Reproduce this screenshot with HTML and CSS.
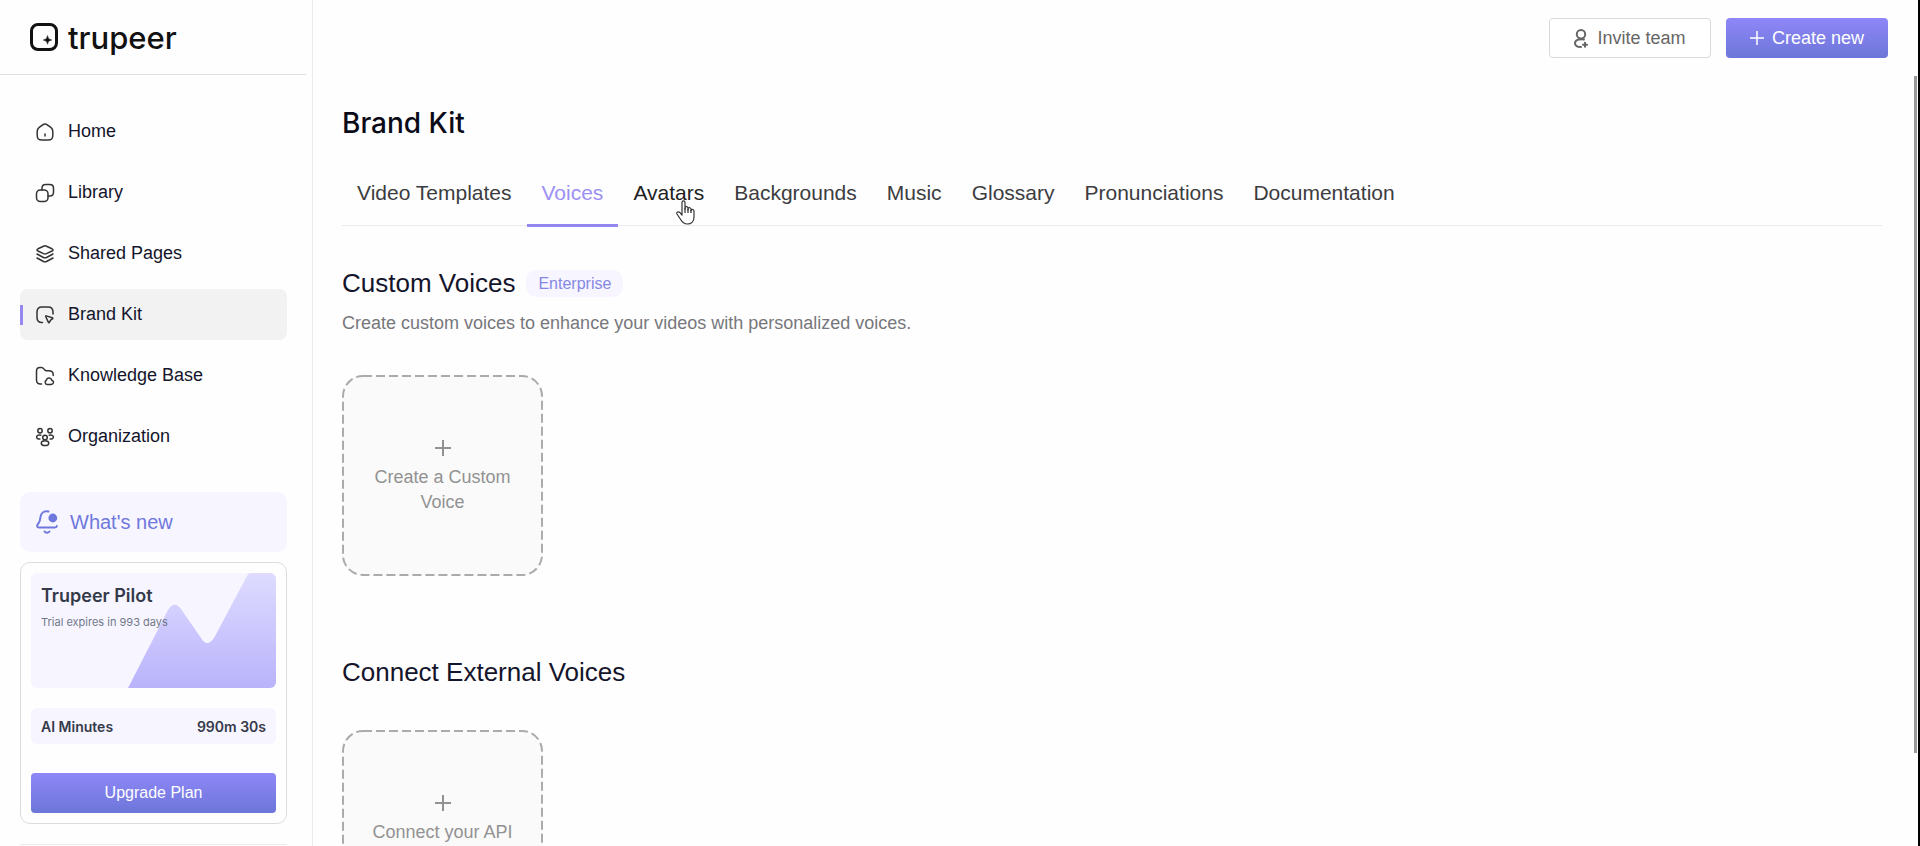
FILE: index.html
```html
<!DOCTYPE html>
<html lang="en">
<head>
    <meta charset="utf-8">
    <title>Brand Kit</title>
    <link rel="stylesheet" href="styles.css">
</head>
<body>
    <aside class="sidebar">
        <a class="logo" href="#">
            <svg width="28" height="28" viewBox="0 0 28 28" fill="none" stroke="#111" stroke-width="3">
                <rect x="1.5" y="1.5" width="25" height="25" rx="6.5"/>
                <path d="M17.500 12.500Q17.800 16.700 21.800 17Q17.800 17.300 17.500 21.300Q17.200 17.300 13.200 17Q17.200 16.700 17.500 12.500Z" fill="#111" stroke-width="0.5"/>
            </svg>
            <span>trupeer</span>
        </a>

        <nav class="nav">
            <a class="nav-item" href="#">
                <svg class="icon" viewBox="0 0 18 18">
                    <path d="M1.200 8.500C1.200 6.400 1.700 5.600 3.200 4.400L6.700 1.800C8.300 .7 9.700 .7 11.300 1.800L14.800 4.400C16.300 5.600 16.800 6.400 16.800 8.500V12.200C16.800 15.800 15.600 17 12 17H6C2.400 17 1.200 15.800 1.200 12.200Z"/>
                    <path d="M9 11V13"/>
                </svg>
                Home
            </a>
            <a class="nav-item" href="#">
                <svg class="icon" viewBox="0 0 18 18">
                    <rect x="0.500" y="6" width="11.500" height="11.500" rx="3.800"/>
                    <path d="M6 6V4.200C6 1.500 7 .5 9.700 .5H13.800C16.500 .5 17.500 1.500 17.500 4.200V8.300C17.500 11 16.500 12 13.800 12H12"/>
                </svg>
                Library
            </a>
            <a class="nav-item" href="#">
                <svg class="icon" viewBox="0 0 18 18">
                    <path d="M2 3.800L7.500 1.200Q9 .5 10.500 1.200L16 3.800Q18 4.900 16 6L10.500 8.600Q9 9.300 7.500 8.600L2 6Q0 4.900 2 3.800Z"/>
                    <path d="M1 9L7.500 12.500Q9 13.200 10.500 12.500L17 9"/>
                    <path d="M1 13L7.500 16.500Q9 17.200 10.500 16.500L17 13"/>
                </svg>
                Shared Pages
            </a>
            <a class="nav-item active" href="#">
                <svg class="icon" viewBox="0 0 18 18">
                    <path d="M6.500 16.500H6C2.300 16.500 1 15.200 1 11.500V6C1 2.300 2.300 1 6 1H12C15.700 1 17 2.300 17 6V8"/>
                    <path d="M10.200 9.900L16.300 11.700Q17.300 12.200 16.400 12.900L14.600 14.100L13.500 16.200Q12.800 17.200 12.300 16.100L9.700 10.500Q9.500 9.700 10.200 9.900Z"/>
                </svg>
                Brand Kit
            </a>
            <a class="nav-item" href="#">
                <svg class="icon" viewBox="0 0 18 18">
                    <path d="M5.500 17H4.500C1.600 17 .5 15.900 .5 13V4C.5 1.400 1.500 .5 4 .5H5.200C6.700 .5 7.100 .8 7.900 1.900L8.600 2.800C9.200 3.600 9.500 3.800 10.700 3.800H13C16 3.800 17.200 4.900 17.200 7.700V8.500"/>
                    <path d="M9.200 15.500C9 14 10 13.200 10.500 13C10.700 11.500 12 10.700 13.400 11C15 11.200 15.600 12.300 15.700 13.300C17.200 13.700 17.700 14.700 17.400 15.800C17 17 16.300 17.400 15.200 17.400H11.200C10 17.400 9.300 16.700 9.200 15.500Z"/>
                </svg>
                Knowledge Base
            </a>
            <a class="nav-item" href="#">
                <svg class="icon" viewBox="0 0 18 18">
                    <circle cx="4" cy="2.800" r="2.200"/>
                    <circle cx="14" cy="2.800" r="2.200"/>
                    <circle cx="9" cy="9.500" r="2.300"/>
                    <ellipse cx="9" cy="15.200" rx="3.700" ry="2.400"/>
                    <path d="M4.800 7.200C2.200 6.600 .6 7.600 .6 9C.6 10.300 2 11.200 3.900 11"/>
                    <path d="M13.200 7.200C15.800 6.600 17.400 7.600 17.400 9C17.400 10.300 16 11.200 14.100 11"/>
                </svg>
                Organization
            </a>
        </nav>

        <a class="whats-new" href="#">
            <svg width="22" height="24" viewBox="0 0 22 24" fill="none" stroke="#6f78dc" stroke-width="2" stroke-linecap="round" stroke-linejoin="round">
                <path d="M12.500 1.500C8.200 .8 5.200 3 4.600 6.500L3.800 10.700C3.500 12.500 1.300 14.300 1.200 15.700C1.100 17 1.800 17.500 3.200 17.500H18.800C20 17.500 20.700 17 20.800 16"/>
                <path d="M8.500 21.500C9.700 23 12.300 23 13.500 21.500"/>
                <circle cx="16.800" cy="8" r="3.400" fill="#6f78dc"/>
            </svg>
            What's new
        </a>

        <section class="plan">
            <div class="plan-banner">
                <svg class="plan-art" viewBox="0 0 148 116">
                    <defs>
                        <linearGradient id="artFill" x1="0" y1="0" x2="0" y2="1">
                            <stop offset="0" stop-color="#dfdcff"/>
                            <stop offset="1" stop-color="#b9b3fb"/>
                        </linearGradient>
                    </defs>
                    <path d="M0 116L40 38Q46 28 53 37L73 66Q79 76 86 66L119 4Q121 0 126 0H148V116Z" fill="url(#artFill)"/>
                </svg>
                <h2>Trupeer Pilot</h2>
                <p>Trial expires in 993 days</p>
            </div>
            <div class="minutes">
                <span>AI Minutes</span>
                <span>990m 30s</span>
            </div>
            <button class="primary upgrade">Upgrade Plan</button>
        </section>
        <div class="sidebar-footer"></div>
    </aside>

    <main class="main">
        <header class="topbar">
            <button class="invite">
                <svg width="14" height="19" viewBox="0 0 14 19" fill="none" stroke="#666" stroke-width="2" stroke-linecap="round">
                    <circle cx="7" cy="5.200" r="4.200"/>
                    <path d="M10 10.500C4.500 9.300 1 11.300 1 14.200C1 16.700 3.200 18 7 18"/>
                    <path d="M11 13.700V17.700M9 15.700H13"/>
                </svg>
                Invite team
            </button>
            <button class="primary create">
                <svg width="14" height="14" viewBox="0 0 14 14" fill="none" stroke="#fff" stroke-width="1.500">
                    <path d="M7 0V14M0 7H14"/>
                </svg>
                Create new
            </button>
        </header>

        <div class="content">
            <h1>Brand Kit</h1>
            <nav class="tabs">
                <a href="#">Video Templates</a>
                <a href="#" class="current">Voices</a>
                <a href="#" class="hovered">Avatars
                    <svg class="pointer" width="19" height="25" viewBox="0 0 19 25" fill="#fff" stroke="#333" stroke-width="1.200" stroke-linejoin="round">
                        <path d="M6 15V2.500C6 .3 9 .3 9 2.500V9V7.500C9.500 6 12 6.300 12 8V10V8.500C12.700 7.200 15 7.500 15 9.300V11V10C15.800 8.900 18 9.400 18 11.300V17C18 21 15.500 24 11.500 24C7.500 24 6 22 4.300 19L1 14C0 12 2.500 11 4 12.700Z"/>
                        <path d="M9 8V13M12 9V13M15 10V13" fill="none"/>
                    </svg>
                </a>
                <a href="#">Backgrounds</a>
                <a href="#">Music</a>
                <a href="#">Glossary</a>
                <a href="#">Pronunciations</a>
                <a href="#">Documentation</a>
            </nav>

            <section class="voices">
                <div class="section-title">
                    <h2>Custom Voices</h2>
                    <span class="badge">Enterprise</span>
                </div>
                <p class="description">Create custom voices to enhance your videos with personalized voices.</p>
                <button class="add-card">
                    <svg class="outline"><rect x="1" y="1" width="199" height="199" rx="20"/></svg>
                    <svg width="18" height="18" viewBox="0 0 18 18" stroke="#929292" stroke-width="2"><path d="M9 1V17M1 9H17"/></svg>
                    <span>Create a Custom Voice</span>
                </button>
            </section>

            <section class="external">
                <h2>Connect External Voices</h2>
                <button class="add-card">
                    <svg class="outline"><rect x="1" y="1" width="199" height="199" rx="20"/></svg>
                    <svg width="18" height="18" viewBox="0 0 18 18" stroke="#929292" stroke-width="2"><path d="M9 1V17M1 9H17"/></svg>
                    <span>Connect your API</span>
                </button>
            </section>
        </div>
    </main>
    <div class="scroll-thumb"></div>
</body>
</html>
```
FILE: styles.css
```css
* {
    box-sizing: border-box;
}
body {
    display: flex;
    height: 100vh;
    margin: 0;
    overflow: hidden;
    border-right: 2px solid #000;
    background-color: #fefefe;
    color: #14142b;
    font-family: "Liberation Sans", Arial, sans-serif;
    font-size: 18px;
}
h1, h2, p {
    margin: 0;
    font-weight: normal;
}
a {
    color: inherit;
    text-decoration: none;
}
button {
    font: inherit;
    cursor: pointer;
}
svg {
    flex: none;
}
.sidebar {
    flex: 0 0 313px;
    border-right: 1px solid #ebebeb;
    overflow: hidden;
}
.logo {
    display: flex;
    align-items: center;
    gap: 10px;
    height: 75px;
    margin-right: 6px;
    padding-left: 30px;
    border-bottom: 1px solid #dedede;
    color: #111;
    font-family: Inter, sans-serif;
    font-size: 31px;
    font-weight: 500;
}
.nav {
    display: flex;
    flex-direction: column;
    gap: 10px;
    padding: 31px 25px 30px 20px;
}
.nav-item {
    display: flex;
    align-items: center;
    gap: 14px;
    height: 51px;
    padding-left: 16px;
    border-radius: 8px;
}
.icon {
    width: 18px;
    height: 18px;
    overflow: visible;
    fill: none;
    stroke: #333;
    stroke-width: 1.5;
    stroke-linecap: round;
    stroke-linejoin: round;
}
.nav-item.active {
    background: linear-gradient(#9488f0, #9488f0) left center / 3px 20px no-repeat #f2f2f2;
}
.whats-new {
    display: flex;
    align-items: center;
    gap: 12px;
    height: 60px;
    margin: 0 25px 10px 20px;
    padding-left: 16px;
    border-radius: 10px;
    background-color: #f7f5ff;
    color: #6f78dc;
    font-size: 20px;
}
.plan {
    margin: 0 25px 20px 20px;
    padding: 10px;
    border: 1px solid #dcdce0;
    border-radius: 10px;
    color: #343a4a;
    font-family: Inter, sans-serif;
}
.plan-banner {
    position: relative;
    height: 115px;
    padding: 12px 10px;
    border-radius: 6px;
    overflow: hidden;
    background-color: #f7f5ff;
}
.plan-art {
    position: absolute;
    right: 0;
    bottom: 0;
    width: 148px;
    height: 116px;
}
.plan-banner h2, .plan-banner p {
    position: relative;
}
.plan-banner h2 {
    margin-bottom: 8px;
    font-size: 18px;
    font-weight: 600;
    line-height: 22px;
}
.plan-banner p {
    color: #717889;
    font-size: 11px;
    line-height: 14px;
}
.minutes {
    display: flex;
    justify-content: space-between;
    align-items: center;
    height: 36px;
    margin: 20px 0 29px;
    padding: 0 10px;
    border-radius: 6px;
    background-color: #f7f5ff;
    font-size: 14px;
    font-weight: 600;
}
.primary {
    height: 40px;
    border: none;
    border-radius: 4px;
    background: linear-gradient(#8f87f8, #6c76d8);
    color: #fff;
}
.upgrade {
    display: block;
    width: 100%;
    font-family: "Liberation Sans", Arial, sans-serif;
    font-size: 16px;
}
.sidebar-footer {
    margin: 0 25px 0 20px;
    border-top: 1px solid #ebebeb;
}
.main {
    flex: 1;
    min-width: 0;
}
.topbar {
    display: flex;
    justify-content: flex-end;
    gap: 15px;
    padding: 18px 30px 0;
}
.invite, .create {
    display: flex;
    align-items: center;
    justify-content: center;
    min-width: 162px;
    padding: 0 20px;
}
.invite {
    gap: 9px;
    height: 40px;
    border: 1px solid #d9d9d9;
    border-radius: 4px;
    background-color: #fff;
    color: #666;
}
.create {
    gap: 8px;
}
.content {
    padding: 45px 36px 0 29px;
}
h1 {
    color: #0b0b18;
    font-family: Inter, sans-serif;
    font-size: 28px;
    font-weight: 500;
    line-height: 40px;
}
.tabs {
    display: flex;
    margin-top: 20px;
    border-bottom: 1px solid #ebebeb;
    color: #3c3c40;
    font-size: 21px;
    line-height: 24px;
}
.tabs a {
    margin-bottom: -2px;
    padding: 18px 15px 19px;
    border-bottom: 3px solid transparent;
}
.tabs .current {
    border-color: #9488f0;
    color: #9b90f3;
}
.tabs .hovered {
    position: relative;
    color: #222;
}
.pointer {
    position: absolute;
    left: 58px;
    top: 37px;
}
.voices {
    margin-top: 41px;
}
.section-title {
    display: flex;
    align-items: center;
    gap: 11px;
}
.section-title h2, .external h2 {
    font-size: 26px;
    line-height: 32px;
}
.badge {
    padding: 0 12px;
    border-radius: 10px;
    background-color: #f7f5ff;
    color: #8588e2;
    font-size: 16px;
    line-height: 27px;
}
.description {
    margin-top: 14px;
    color: #77777c;
    line-height: 20px;
}
.add-card {
    position: relative;
    display: flex;
    flex-direction: column;
    align-items: center;
    justify-content: flex-start;
    gap: 8px;
    width: 201px;
    height: 201px;
    margin-top: 42px;
    padding: 64px 24px 0;
    border: none;
    border-radius: 20px;
    background-color: #fafafa;
    color: #929292;
    line-height: 25px;
}
.outline {
    position: absolute;
    top: 0;
    left: 0;
    width: 100%;
    height: 100%;
    fill: none;
    stroke: #ababab;
    stroke-width: 2;
    stroke-dasharray: 9 4;
}
.external {
    margin-top: 80px;
}
.scroll-thumb {
    position: fixed;
    top: 9vh;
    right: 3px;
    width: 3px;
    height: 80vh;
    background-color: #999;
}
```
